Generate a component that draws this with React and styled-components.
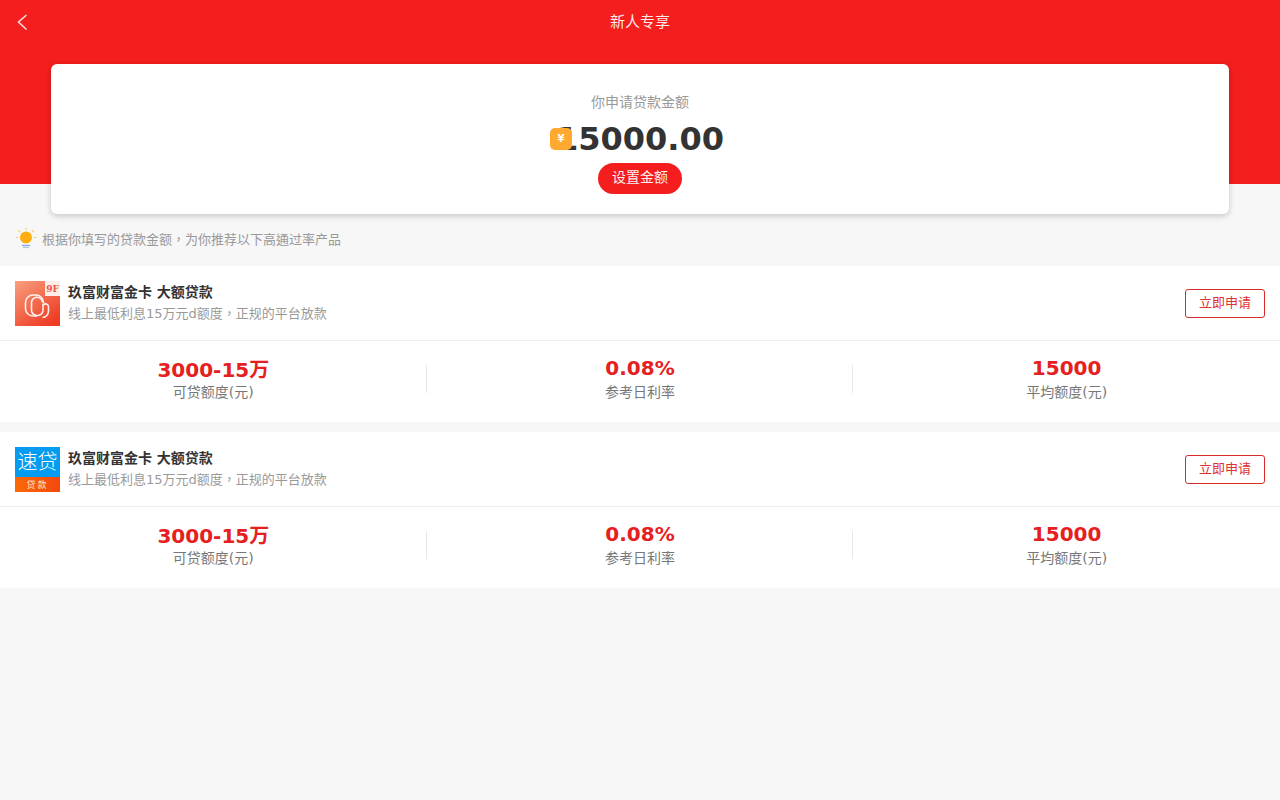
import React from 'react';
import styled, { createGlobalStyle } from 'styled-components';

const Global = createGlobalStyle`
  html, body {
    margin: 0;
    padding: 0;
    background: #f7f7f7;
    font-family: "DejaVu Sans", "Noto Sans CJK TC", sans-serif;
  }
  * { box-sizing: border-box; }
`;

const Page = styled.div`
  width: 100%;
  min-height: 800px;
  background: #f7f7f7;
`;

const Hero = styled.div`
  background: #f41e1e;
  height: 184px;
  padding: 0 51px;
`;

const NavBar = styled.div`
  position: relative;
  height: 64px;
  margin: 0 -51px;
  padding-top: 12px;
  text-align: center;
  color: rgba(255, 255, 255, 0.92);
  font-size: 15px;
  line-height: 20px;
`;

const BackBtn = styled.span`
  position: absolute;
  left: 14px;
  top: 10px;
  display: flex;
`;

const AmountCard = styled.div`
  height: 150px;
  background: #fff;
  border-radius: 6px;
  box-shadow: 0 2px 6px rgba(0, 0, 0, 0.2);
  padding-top: 28px;
  display: flex;
  flex-direction: column;
  align-items: center;
`;

const AmountLabel = styled.div`
  font-size: 14px;
  line-height: 20px;
  color: #999;
`;

const AmountRow = styled.div`
  position: relative;
  font-size: 32px;
  font-weight: bold;
  line-height: 40px;
  margin-top: 7px;
  color: #333;
`;

const Coin = styled.span`
  position: absolute;
  left: -6px;
  top: 9px;
  width: 22px;
  height: 22px;
  border-radius: 5px;
  background: #ffa92f;
  color: #fff;
  font-size: 10px;
  font-weight: bold;
  display: flex;
  align-items: center;
  justify-content: center;
`;

const SetBtn = styled.div`
  margin-top: 4px;
  width: 84px;
  height: 31px;
  padding-bottom: 5px;
  border-radius: 16px;
  background: #f41e1e;
  color: rgba(255, 255, 255, 0.95);
  font-size: 14px;
  display: flex;
  align-items: center;
  justify-content: center;
`;

const Tip = styled.div`
  height: 52px;
  margin-top: 30px;
  padding: 0 0 3px 15px;
  display: flex;
  align-items: center;
  gap: 5px;
  color: #999;
  font-size: 13px;
`;

const ProductCard = styled.div`
  background: #fff;
  margin-bottom: 10px;
`;

const ProductHead = styled.div`
  height: 75px;
  padding: 0 15px;
  display: flex;
  align-items: center;
  gap: 8px;
  border-bottom: 1px solid #eee;
`;

const ProductInfo = styled.div`
  flex: 1;
  display: flex;
  flex-direction: column;
  gap: 2px;
`;

const ProductName = styled.div`
  font-size: 14px;
  line-height: 19px;
  font-weight: bold;
  color: #333;
`;

const ProductDesc = styled.div`
  font-size: 13px;
  line-height: 19px;
  color: #999;
`;

const ApplyBtn = styled.div`
  width: 80px;
  height: 29px;
  padding-bottom: 4px;
  border: 1px solid #d92b2b;
  border-radius: 3px;
  color: #e03030;
  font-size: 13px;
  display: flex;
  align-items: center;
  justify-content: center;
`;

const Stats = styled.div`
  height: 81px;
  display: grid;
  grid-template-columns: repeat(3, 1fr);
  padding-top: 14px;
`;

const Stat = styled.div`
  position: relative;
  text-align: center;

  & + &::before {
    content: '';
    position: absolute;
    left: -1px;
    top: 10px;
    height: 28px;
    width: 1px;
    background: #e8e8e8;
  }
`;

const StatValue = styled.div`
  height: ${props => props.$cjk ? '28px' : '26px'};
  margin-top: ${props => props.$cjk ? '-1px' : '1px'};
  font-size: 20px;
  font-weight: bold;
  color: #e62020;
`;

const StatLabel = styled.div`
  font-size: 14px;
  line-height: 20px;
  color: #777;
`;

const Bulb = () => (
  <svg width="22" height="24" viewBox="0 0 22 24">
    <g stroke="#ffcf66" strokeWidth="1.2" strokeLinecap="round">
      <path d="M11 1v1.500M3.500 3.500l1.400 1.400M18.500 3.500l-1.400 1.400M1 10.500h1.500M19.500 10.500h1.500" />
    </g>
    <circle cx="11" cy="10.500" r="6" fill="#ffae12" />
    <path d="M7 18.500h8" stroke="#7aa6e8" strokeWidth="1.200" />
    <path d="M8 20.500h6" stroke="#a9c6ee" strokeWidth="1.200" />
  </svg>
);

const LogoOne = () => (
  <svg width="45" height="45" viewBox="0 0 45 45" style={{ flexShrink: 0 }}>
    <defs>
      <linearGradient id="logoOne" x1="0" y1="0" x2="0.7" y2="1">
        <stop offset="0" stopColor="#f8a07f" />
        <stop offset="1" stopColor="#ee3d24" />
      </linearGradient>
    </defs>
    <rect width="45" height="45" fill="url(#logoOne)" />
    <path d="M30 0h15v15h-15z" fill="#fdeeea" />
    <text x="37.500" y="11" textAnchor="middle" fontSize="9" fontWeight="bold" fill="#e8553f" fontFamily="DejaVu Serif">9F</text>
    <g fill="none" stroke="#fff" strokeWidth="1.600" opacity="0.9">
      <path d="M22 35h-4a7.500 7.500 0 0 1-7.500-7.500v-6a7.500 7.500 0 0 1 7.500-7.500h3a7.500 7.500 0 0 1 7.500 7.500v1" />
      <path d="M28 23v7a6 6 0 0 1-11 1.500 6 6 0 0 1-.5-2.500v-7a5.500 5.500 0 0 1 11-.5" />
      <path d="M27.500 36.500a6.500 6.500 0 0 0 6-6.500v-4.500a2.800 2.800 0 0 0-5-1.500" />
    </g>
  </svg>
);

const LogoTwo = () => (
  <svg width="45" height="45" viewBox="0 0 45 45" style={{ flexShrink: 0 }}>
    <defs>
      <linearGradient id="logoTwoBand" x1="0" y1="0" x2="1" y2="0">
        <stop offset="0" stopColor="#fb6a06" />
        <stop offset="1" stopColor="#f4480f" />
      </linearGradient>
    </defs>
    <rect width="45" height="30" fill="#049cf0" />
    <rect y="30" width="45" height="15" fill="url(#logoTwoBand)" />
    <text x="22.500" y="22" textAnchor="middle" fontSize="20" fill="#fff" fontFamily="Noto Sans CJK SC" fontWeight="300">速贷</text>
    <text x="22.500" y="41" textAnchor="middle" fontSize="9" fill="#ffe9d8" fontFamily="Noto Sans CJK SC" letterSpacing="2">贷款</text>
  </svg>
);

const products = [
  { id: 1, Logo: LogoOne },
  { id: 2, Logo: LogoTwo },
];

const App = () => {
  return (
    <Page>
      <Global />
      <Hero>
        <NavBar>
          <BackBtn>
            <svg width="18" height="24" viewBox="0 0 18 24" fill="none">
              <path d="M12.500 5L4.500 12l8 7.500" stroke="#fff" strokeWidth="1.600" opacity="0.85" />
            </svg>
          </BackBtn>
          新人专享
        </NavBar>
        <AmountCard>
          <AmountLabel>你申请贷款金额</AmountLabel>
          <AmountRow>
            <Coin>¥</Coin>
            15000.00
          </AmountRow>
          <SetBtn>设置金额</SetBtn>
        </AmountCard>
      </Hero>
      <Tip>
        <Bulb />
        根据你填写的贷款金额，为你推荐以下高通过率产品
      </Tip>
      {products.map(({ id, Logo }) => (
        <ProductCard key={id}>
          <ProductHead>
            <Logo />
            <ProductInfo>
              <ProductName>玖富财富金卡 大额贷款</ProductName>
              <ProductDesc>线上最低利息15万元d额度，正规的平台放款</ProductDesc>
            </ProductInfo>
            <ApplyBtn>立即申请</ApplyBtn>
          </ProductHead>
          <Stats>
            <Stat>
              <StatValue $cjk>3000-15万</StatValue>
              <StatLabel>可贷额度(元)</StatLabel>
            </Stat>
            <Stat>
              <StatValue>0.08%</StatValue>
              <StatLabel>参考日利率</StatLabel>
            </Stat>
            <Stat>
              <StatValue>15000</StatValue>
              <StatLabel>平均额度(元)</StatLabel>
            </Stat>
          </Stats>
        </ProductCard>
      ))}
    </Page>
  );
};

export default App;
